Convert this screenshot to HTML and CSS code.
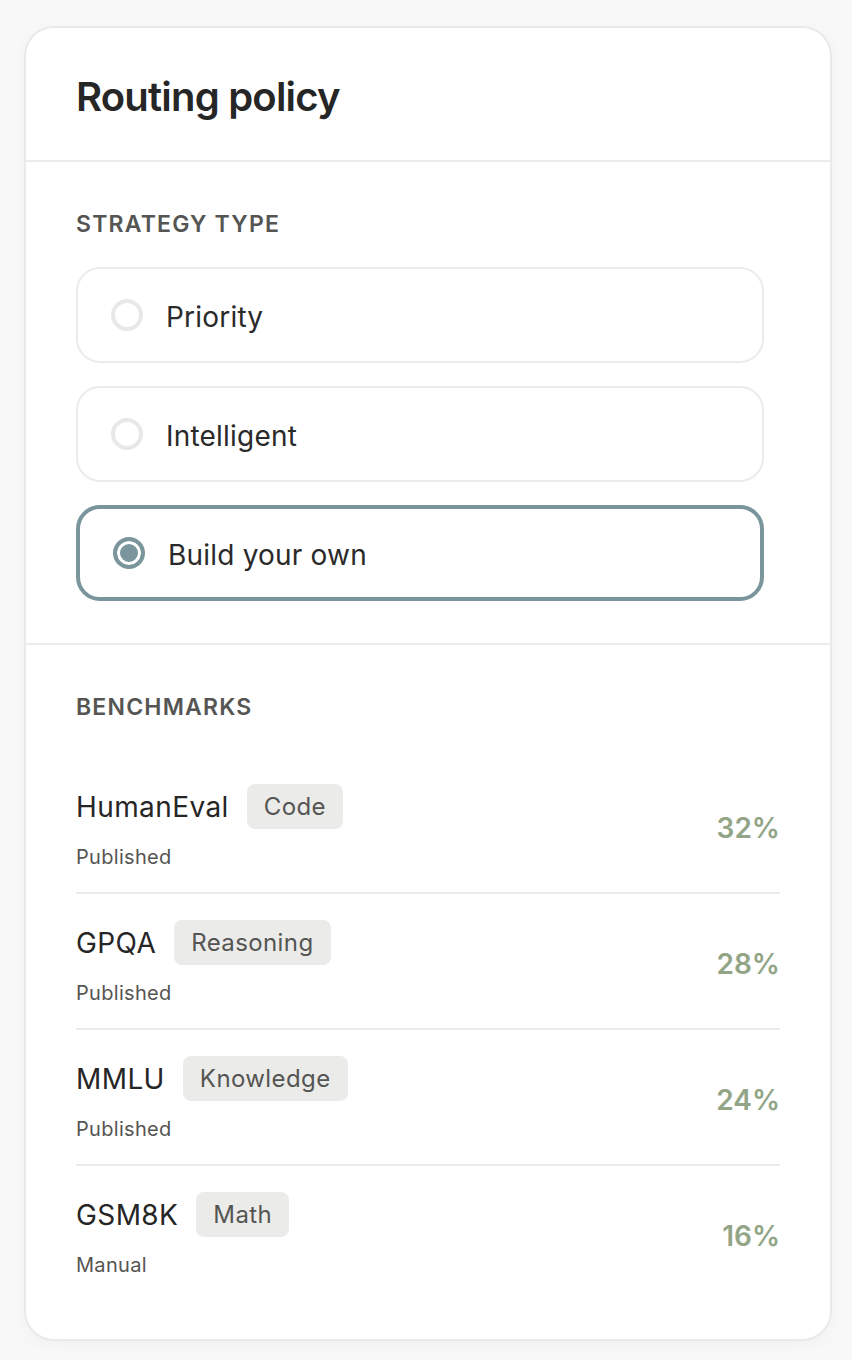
FILE: index.html
```html
<!DOCTYPE html>
<html lang="en">
<head>
  <meta charset="UTF-8">
  <meta name="viewport" content="width=device-width, initial-scale=1.0">
  <title>Routing policy</title>
  <link rel="stylesheet" href="styles.css">
</head>
<body>
  <div class="card">
    <div class="card-header">
      <h1 class="title">Routing policy</h1>
    </div>

    <div class="section strategy">
      <div class="section-label">Strategy type</div>
      <div class="options">
        <label class="option">
          <span class="radio"></span>
          <span class="option-text">Priority</span>
        </label>
        <label class="option">
          <span class="radio"></span>
          <span class="option-text">Intelligent</span>
        </label>
        <label class="option selected">
          <span class="radio"></span>
          <span class="option-text">Build your own</span>
        </label>
      </div>
    </div>

    <div class="section benchmarks">
      <div class="section-label">Benchmarks</div>
      <div class="bench-list">
        <div class="bench-row">
          <div class="bench-info">
            <div class="bench-top">
              <span class="bench-name">HumanEval</span>
              <span class="chip">Code</span>
            </div>
            <div class="bench-source">Published</div>
          </div>
          <div class="bench-weight">32%</div>
        </div>
        <div class="bench-row">
          <div class="bench-info">
            <div class="bench-top">
              <span class="bench-name">GPQA</span>
              <span class="chip">Reasoning</span>
            </div>
            <div class="bench-source">Published</div>
          </div>
          <div class="bench-weight">28%</div>
        </div>
        <div class="bench-row">
          <div class="bench-info">
            <div class="bench-top">
              <span class="bench-name">MMLU</span>
              <span class="chip">Knowledge</span>
            </div>
            <div class="bench-source">Published</div>
          </div>
          <div class="bench-weight">24%</div>
        </div>
        <div class="bench-row">
          <div class="bench-info">
            <div class="bench-top">
              <span class="bench-name">GSM8K</span>
              <span class="chip">Math</span>
            </div>
            <div class="bench-source">Manual</div>
          </div>
          <div class="bench-weight">16%</div>
        </div>
      </div>
    </div>
  </div>
</body>
</html>
```

FILE: styles.css
```css
body {
  margin: 0;
  padding: 26px 20px 18px 24px;
  background-color: #f8f8f8;
  font-family: Inter, "Noto Sans", Arial, sans-serif;
  color: #2a2a2a;
}

.card {
  background-color: #fff;
  border: 2px solid #e9e9e9;
  border-radius: 30px;
  box-shadow: 0 4px 16px rgba(0, 0, 0, 0.03);
  overflow: hidden;
}

.card-header {
  padding: 45px 50px 39px;
  border-bottom: 2px solid #ebebeb;
}

.title {
  margin: 0;
  font-size: 40px;
  line-height: 48px;
  font-weight: 600;
  letter-spacing: -0.8px;
  color: #262626;
}

.section {
  padding: 48px 50px 42px;
}

.strategy {
  border-bottom: 2px solid #ebebeb;
}

.section-label {
  font-size: 23px;
  line-height: 28px;
  font-weight: 600;
  letter-spacing: 1.2px;
  text-transform: uppercase;
  color: #555553;
}

/* strategy options */

.options {
  display: flex;
  flex-direction: column;
  gap: 23px;
  margin-top: 29px;
  margin-right: 16px;
}

.option {
  display: flex;
  align-items: center;
  gap: 23px;
  box-sizing: border-box;
  height: 96px;
  padding: 0 33px;
  border: 2px solid #ebebeb;
  border-radius: 24px;
  cursor: pointer;
}

.radio {
  box-sizing: border-box;
  width: 32px;
  height: 32px;
  border: 4px solid #e8e8e8;
  border-radius: 50%;
  flex-shrink: 0;
}

.option-text {
  padding-top: 3px;
  font-size: 28px;
  line-height: 36px;
  letter-spacing: 0.2px;
  color: #2a2a2a;
}

.option.selected {
  border: 4px solid #7a969c;
}

.option.selected .radio {
  border-color: #7a969c;
  background-color: #7a969c;
  box-shadow: inset 0 0 0 3px #fff;
}

/* benchmarks */

.benchmarks {
  padding-bottom: 39px;
}

.bench-list {
  margin-top: 37px;
}

.bench-row {
  display: flex;
  align-items: center;
  justify-content: space-between;
  padding: 26px 0 21px;
  border-bottom: 2px solid #ebebeb;
}

.bench-row:last-child {
  border-bottom: none;
}

.bench-top {
  display: flex;
  align-items: center;
  gap: 18px;
  height: 45px;
}

.bench-name {
  font-size: 28px;
  line-height: 36px;
  letter-spacing: 0.4px;
  color: #262626;
}

.chip {
  padding: 0 17px;
  height: 45px;
  line-height: 45px;
  font-size: 24px;
  letter-spacing: 0.4px;
  color: #555553;
  background-color: #ebebea;
  border-radius: 8px;
}

.bench-source {
  margin-top: 14px;
  font-size: 20px;
  line-height: 28px;
  letter-spacing: 0.3px;
  color: #555553;
}

.bench-weight {
  font-size: 28px;
  font-weight: 600;
  color: #93a587;
}
```
